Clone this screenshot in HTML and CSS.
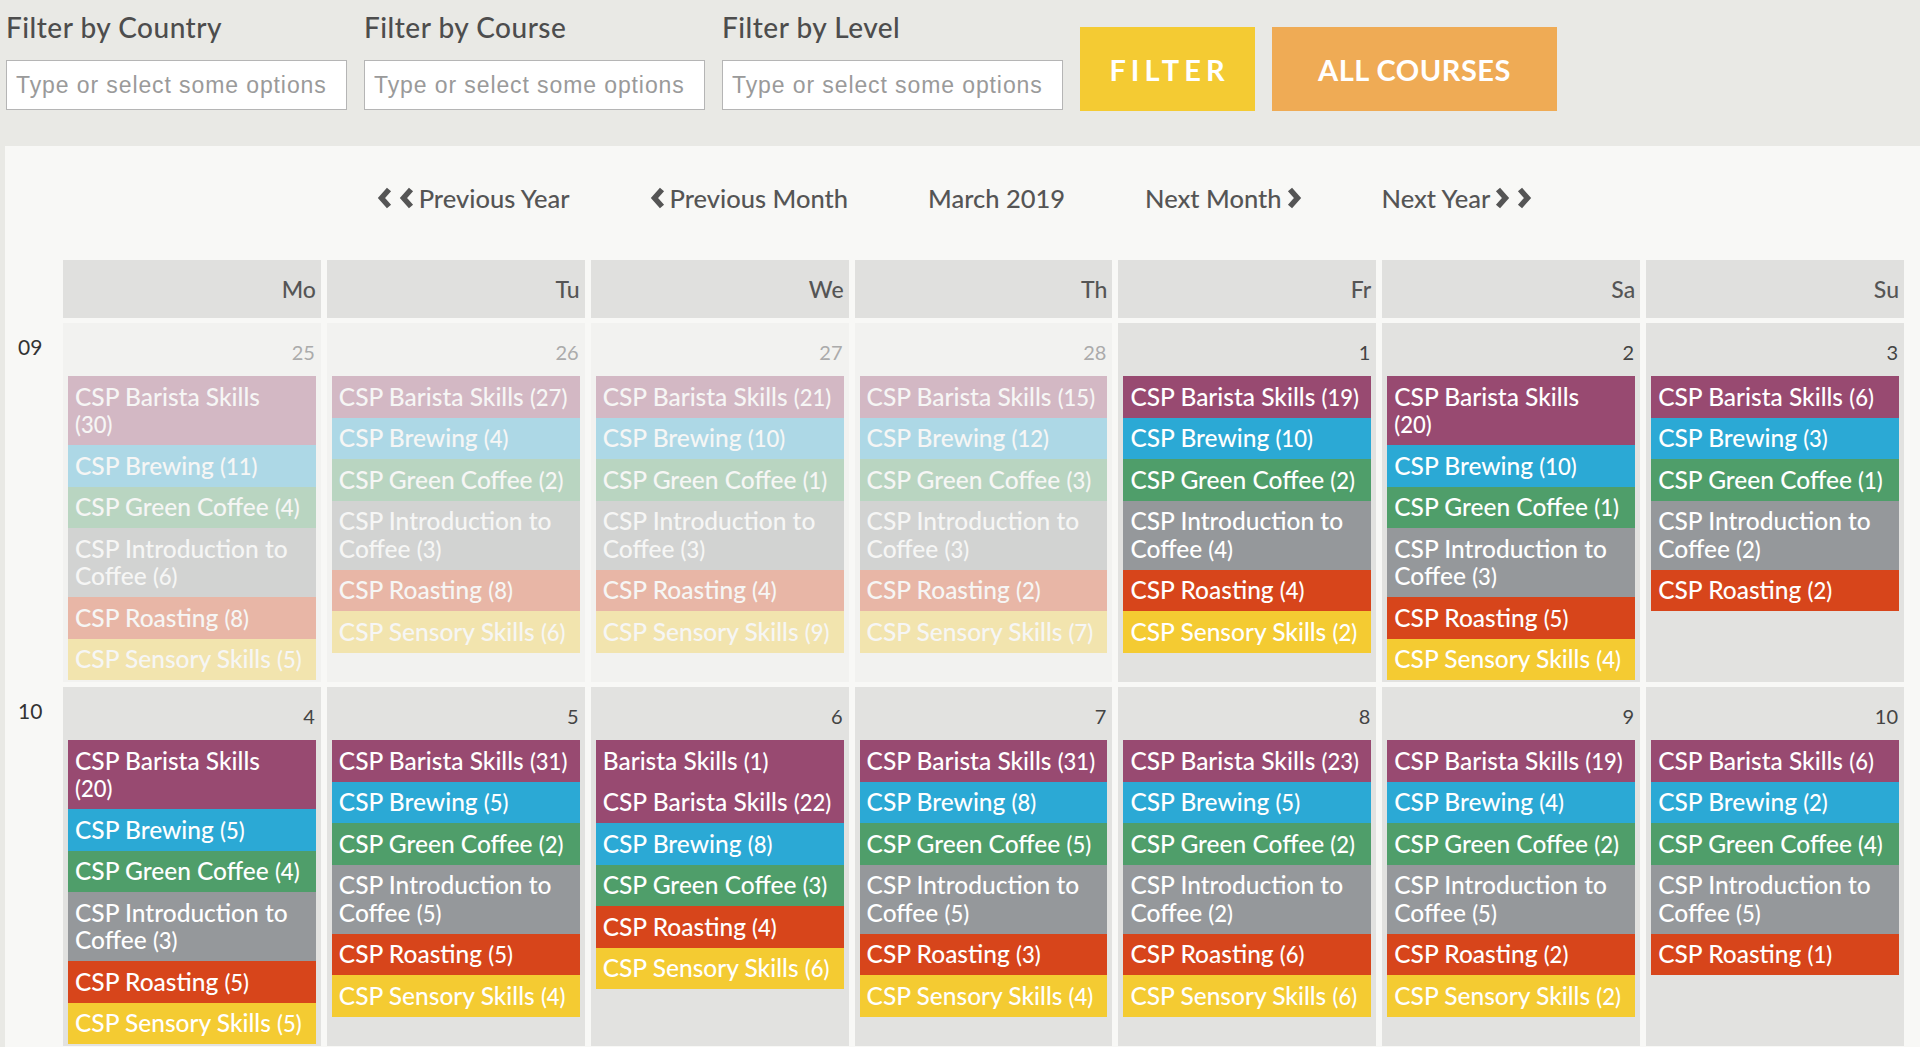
FILE: index.html
```html
<!DOCTYPE html>
<html lang="en">
<head>
  <meta charset="UTF-8">
  <meta name="viewport" content="width=device-width, initial-scale=1.0">
  <title>Course Calendar</title>
  <link rel="stylesheet" href="styles.css">
</head>
<body>
  <!-- Filters -->
  <form class="filters">
    <div class="field">
      <label for="country">Filter by Country</label>
      <input id="country" type="text" placeholder="Type or select some options">
    </div>
    <div class="field">
      <label for="course">Filter by Course</label>
      <input id="course" type="text" placeholder="Type or select some options">
    </div>
    <div class="field">
      <label for="level">Filter by Level</label>
      <input id="level" type="text" placeholder="Type or select some options">
    </div>
    <button type="button" class="btn btn-filter">FILTER</button>
    <button type="button" class="btn btn-all">ALL COURSES</button>
  </form>

  <!-- Calendar -->
  <section class="calendar">
    <nav class="cal-nav">
      <a href="#" class="nav-link">
        <span class="chevs">
          <svg class="chev" viewBox="0 0 16 22"><path d="M12 2.5 L4.5 11 L12 19.5"/></svg>
          <svg class="chev" viewBox="0 0 16 22"><path d="M12 2.5 L4.5 11 L12 19.5"/></svg>
        </span>
        Previous Year
      </a>
      <a href="#" class="nav-link">
        <svg class="chev" viewBox="0 0 16 22"><path d="M12 2.5 L4.5 11 L12 19.5"/></svg>
        Previous Month
      </a>
      <span class="nav-current">March 2019</span>
      <a href="#" class="nav-link">
        Next Month
        <svg class="chev" viewBox="0 0 16 22"><path d="M4 2.5 L11.5 11 L4 19.5"/></svg>
      </a>
      <a href="#" class="nav-link">
        Next Year
        <span class="chevs">
          <svg class="chev" viewBox="0 0 16 22"><path d="M4 2.5 L11.5 11 L4 19.5"/></svg>
          <svg class="chev" viewBox="0 0 16 22"><path d="M4 2.5 L11.5 11 L4 19.5"/></svg>
        </span>
      </a>
    </nav>

    <div class="cal-grid">
      <div class="week-head"></div>
      <div class="dow">Mo</div>
      <div class="dow">Tu</div>
      <div class="dow">We</div>
      <div class="dow">Th</div>
      <div class="dow">Fr</div>
      <div class="dow">Sa</div>
      <div class="dow">Su</div>

      <!-- week 09 -->
      <div class="week">09</div>
      <div class="day other-month">
        <span class="num">25</span>
        <ul class="events">
          <li class="ev barista">CSP Barista Skills<br><span class="count">(30)</span></li>
          <li class="ev brewing">CSP Brewing <span class="count">(11)</span></li>
          <li class="ev green">CSP Green Coffee <span class="count">(4)</span></li>
          <li class="ev intro">CSP Introduction to Coffee <span class="count">(6)</span></li>
          <li class="ev roasting">CSP Roasting <span class="count">(8)</span></li>
          <li class="ev sensory">CSP Sensory Skills <span class="count">(5)</span></li>
        </ul>
      </div>
      <div class="day other-month">
        <span class="num">26</span>
        <ul class="events">
          <li class="ev barista">CSP Barista Skills <span class="count">(27)</span></li>
          <li class="ev brewing">CSP Brewing <span class="count">(4)</span></li>
          <li class="ev green">CSP Green Coffee <span class="count">(2)</span></li>
          <li class="ev intro">CSP Introduction to Coffee <span class="count">(3)</span></li>
          <li class="ev roasting">CSP Roasting <span class="count">(8)</span></li>
          <li class="ev sensory">CSP Sensory Skills <span class="count">(6)</span></li>
        </ul>
      </div>
      <div class="day other-month">
        <span class="num">27</span>
        <ul class="events">
          <li class="ev barista">CSP Barista Skills <span class="count">(21)</span></li>
          <li class="ev brewing">CSP Brewing <span class="count">(10)</span></li>
          <li class="ev green">CSP Green Coffee <span class="count">(1)</span></li>
          <li class="ev intro">CSP Introduction to Coffee <span class="count">(3)</span></li>
          <li class="ev roasting">CSP Roasting <span class="count">(4)</span></li>
          <li class="ev sensory">CSP Sensory Skills <span class="count">(9)</span></li>
        </ul>
      </div>
      <div class="day other-month">
        <span class="num">28</span>
        <ul class="events">
          <li class="ev barista">CSP Barista Skills <span class="count">(15)</span></li>
          <li class="ev brewing">CSP Brewing <span class="count">(12)</span></li>
          <li class="ev green">CSP Green Coffee <span class="count">(3)</span></li>
          <li class="ev intro">CSP Introduction to Coffee <span class="count">(3)</span></li>
          <li class="ev roasting">CSP Roasting <span class="count">(2)</span></li>
          <li class="ev sensory">CSP Sensory Skills <span class="count">(7)</span></li>
        </ul>
      </div>
      <div class="day">
        <span class="num">1</span>
        <ul class="events">
          <li class="ev barista">CSP Barista Skills <span class="count">(19)</span></li>
          <li class="ev brewing">CSP Brewing <span class="count">(10)</span></li>
          <li class="ev green">CSP Green Coffee <span class="count">(2)</span></li>
          <li class="ev intro">CSP Introduction to Coffee <span class="count">(4)</span></li>
          <li class="ev roasting">CSP Roasting <span class="count">(4)</span></li>
          <li class="ev sensory">CSP Sensory Skills <span class="count">(2)</span></li>
        </ul>
      </div>
      <div class="day">
        <span class="num">2</span>
        <ul class="events">
          <li class="ev barista">CSP Barista Skills<br><span class="count">(20)</span></li>
          <li class="ev brewing">CSP Brewing <span class="count">(10)</span></li>
          <li class="ev green">CSP Green Coffee <span class="count">(1)</span></li>
          <li class="ev intro">CSP Introduction to Coffee <span class="count">(3)</span></li>
          <li class="ev roasting">CSP Roasting <span class="count">(5)</span></li>
          <li class="ev sensory">CSP Sensory Skills <span class="count">(4)</span></li>
        </ul>
      </div>
      <div class="day">
        <span class="num">3</span>
        <ul class="events">
          <li class="ev barista">CSP Barista Skills <span class="count">(6)</span></li>
          <li class="ev brewing">CSP Brewing <span class="count">(3)</span></li>
          <li class="ev green">CSP Green Coffee <span class="count">(1)</span></li>
          <li class="ev intro">CSP Introduction to Coffee <span class="count">(2)</span></li>
          <li class="ev roasting">CSP Roasting <span class="count">(2)</span></li>
        </ul>
      </div>

      <!-- week 10 -->
      <div class="week">10</div>
      <div class="day">
        <span class="num">4</span>
        <ul class="events">
          <li class="ev barista">CSP Barista Skills<br><span class="count">(20)</span></li>
          <li class="ev brewing">CSP Brewing <span class="count">(5)</span></li>
          <li class="ev green">CSP Green Coffee <span class="count">(4)</span></li>
          <li class="ev intro">CSP Introduction to Coffee <span class="count">(3)</span></li>
          <li class="ev roasting">CSP Roasting <span class="count">(5)</span></li>
          <li class="ev sensory">CSP Sensory Skills <span class="count">(5)</span></li>
        </ul>
      </div>
      <div class="day">
        <span class="num">5</span>
        <ul class="events">
          <li class="ev barista">CSP Barista Skills <span class="count">(31)</span></li>
          <li class="ev brewing">CSP Brewing <span class="count">(5)</span></li>
          <li class="ev green">CSP Green Coffee <span class="count">(2)</span></li>
          <li class="ev intro">CSP Introduction to Coffee <span class="count">(5)</span></li>
          <li class="ev roasting">CSP Roasting <span class="count">(5)</span></li>
          <li class="ev sensory">CSP Sensory Skills <span class="count">(4)</span></li>
        </ul>
      </div>
      <div class="day">
        <span class="num">6</span>
        <ul class="events">
          <li class="ev barista">Barista Skills <span class="count">(1)</span></li>
          <li class="ev barista">CSP Barista Skills <span class="count">(22)</span></li>
          <li class="ev brewing">CSP Brewing <span class="count">(8)</span></li>
          <li class="ev green">CSP Green Coffee <span class="count">(3)</span></li>
          <li class="ev roasting">CSP Roasting <span class="count">(4)</span></li>
          <li class="ev sensory">CSP Sensory Skills <span class="count">(6)</span></li>
        </ul>
      </div>
      <div class="day">
        <span class="num">7</span>
        <ul class="events">
          <li class="ev barista">CSP Barista Skills <span class="count">(31)</span></li>
          <li class="ev brewing">CSP Brewing <span class="count">(8)</span></li>
          <li class="ev green">CSP Green Coffee <span class="count">(5)</span></li>
          <li class="ev intro">CSP Introduction to Coffee <span class="count">(5)</span></li>
          <li class="ev roasting">CSP Roasting <span class="count">(3)</span></li>
          <li class="ev sensory">CSP Sensory Skills <span class="count">(4)</span></li>
        </ul>
      </div>
      <div class="day">
        <span class="num">8</span>
        <ul class="events">
          <li class="ev barista">CSP Barista Skills <span class="count">(23)</span></li>
          <li class="ev brewing">CSP Brewing <span class="count">(5)</span></li>
          <li class="ev green">CSP Green Coffee <span class="count">(2)</span></li>
          <li class="ev intro">CSP Introduction to Coffee <span class="count">(2)</span></li>
          <li class="ev roasting">CSP Roasting <span class="count">(6)</span></li>
          <li class="ev sensory">CSP Sensory Skills <span class="count">(6)</span></li>
        </ul>
      </div>
      <div class="day">
        <span class="num">9</span>
        <ul class="events">
          <li class="ev barista">CSP Barista Skills <span class="count">(19)</span></li>
          <li class="ev brewing">CSP Brewing <span class="count">(4)</span></li>
          <li class="ev green">CSP Green Coffee <span class="count">(2)</span></li>
          <li class="ev intro">CSP Introduction to Coffee <span class="count">(5)</span></li>
          <li class="ev roasting">CSP Roasting <span class="count">(2)</span></li>
          <li class="ev sensory">CSP Sensory Skills <span class="count">(2)</span></li>
        </ul>
      </div>
      <div class="day">
        <span class="num">10</span>
        <ul class="events">
          <li class="ev barista">CSP Barista Skills <span class="count">(6)</span></li>
          <li class="ev brewing">CSP Brewing <span class="count">(2)</span></li>
          <li class="ev green">CSP Green Coffee <span class="count">(4)</span></li>
          <li class="ev intro">CSP Introduction to Coffee <span class="count">(5)</span></li>
          <li class="ev roasting">CSP Roasting <span class="count">(1)</span></li>
        </ul>
      </div>
    </div>
  </section>
</body>
</html>
```

FILE: styles.css
```css
/* Page */
body {
  margin: 0;
  background: #e9e9e5;
  font-family: Lato, "Open Sans", sans-serif;
  color: #4a4a4a;
}

/* Filter bar */
.filters {
  display: flex;
  align-items: flex-start;
  gap: 17px;
  height: 146px;
  box-sizing: border-box;
  padding: 11px 0 0 6px;
  margin: 0;
}

.field label {
  display: block;
  font-size: 28px;
  font-weight: 500;
  line-height: 32px;
  letter-spacing: 0.5px;
  margin-bottom: 17px;
  color: #4d4d4d;
}

.field input {
  width: 341px;
  height: 50px;
  box-sizing: border-box;
  border: 1px solid #b5b5b5;
  background: #fff;
  padding: 0 9px;
  font-family: "Liberation Sans", Arial, sans-serif;
  font-size: 23px;
  letter-spacing: 0.9px;
  color: #555;
}

.field input::placeholder {
  color: #9a9a9a;
}

.btn {
  margin-top: 16px;
  height: 84px;
  border: none;
  color: #fff;
  font-family: Lato, sans-serif;
  font-weight: 700;
  font-size: 29px;
  cursor: pointer;
}

.btn-filter {
  width: 175px;
  background: #f4cb33;
  letter-spacing: 5px;
  padding-left: 10px;
}

.btn-all {
  width: 285px;
  background: #efab55;
  letter-spacing: 0.5px;
}

/* Calendar panel */
.calendar {
  margin-left: 5px;
  background: #f8f8f6;
  padding: 0 16px 20px 0;
}

.cal-nav {
  display: flex;
  justify-content: center;
  align-items: center;
  gap: 80px;
  height: 114px;
  padding-bottom: 10px;
  box-sizing: border-box;
  font-size: 25.5px;
  font-weight: 500;
}

.nav-link,
.nav-current {
  display: flex;
  align-items: center;
  gap: 4px;
  color: #555;
  text-decoration: none;
}

.chevs {
  display: flex;
  gap: 6px;
}

.chev {
  width: 16px;
  height: 22px;
  fill: none;
  stroke: #555;
  stroke-width: 5.5;
  stroke-linejoin: miter;
}

.cal-grid {
  display: grid;
  grid-template-columns: 52px repeat(7, 1fr);
  column-gap: 6px;
  row-gap: 5px;
}

.dow {
  height: 58px;
  background: #e0e0de;
  display: flex;
  align-items: center;
  justify-content: flex-end;
  padding-right: 5px;
  font-size: 23px;
  font-weight: 500;
  color: #555;
}

.week {
  padding: 11px 0 0 13px;
  font-size: 21px;
  color: #333;
}

.day {
  background: #e2e2e0;
  padding: 5px 5px 2px;
}

.day .num {
  display: block;
  text-align: right;
  font-size: 20px;
  line-height: 22px;
  margin: 13px 1px 13px 0;
  color: #444;
}

.day.other-month {
  background: #f2f2f0;
}

.day.other-month .num {
  color: #ababab;
}

.day.other-month .events {
  opacity: 0.34;
}

.events {
  list-style: none;
  margin: 0;
  padding: 0;
}

.ev {
  padding: 6.5px 4px 6.5px 7px;
  font-size: 24.5px;
  font-weight: 500;
  line-height: 27.5px;
  color: #fff;
}

.ev .count {
  font-size: 0.9em;
}

.barista  { background: #984a71; }
.brewing  { background: #2ba9d5; }
.green    { background: #4f9e6a; }
.intro    { background: #95989b; }
.roasting { background: #d7451b; }
.sensory  { background: #f4cb32; }
```
